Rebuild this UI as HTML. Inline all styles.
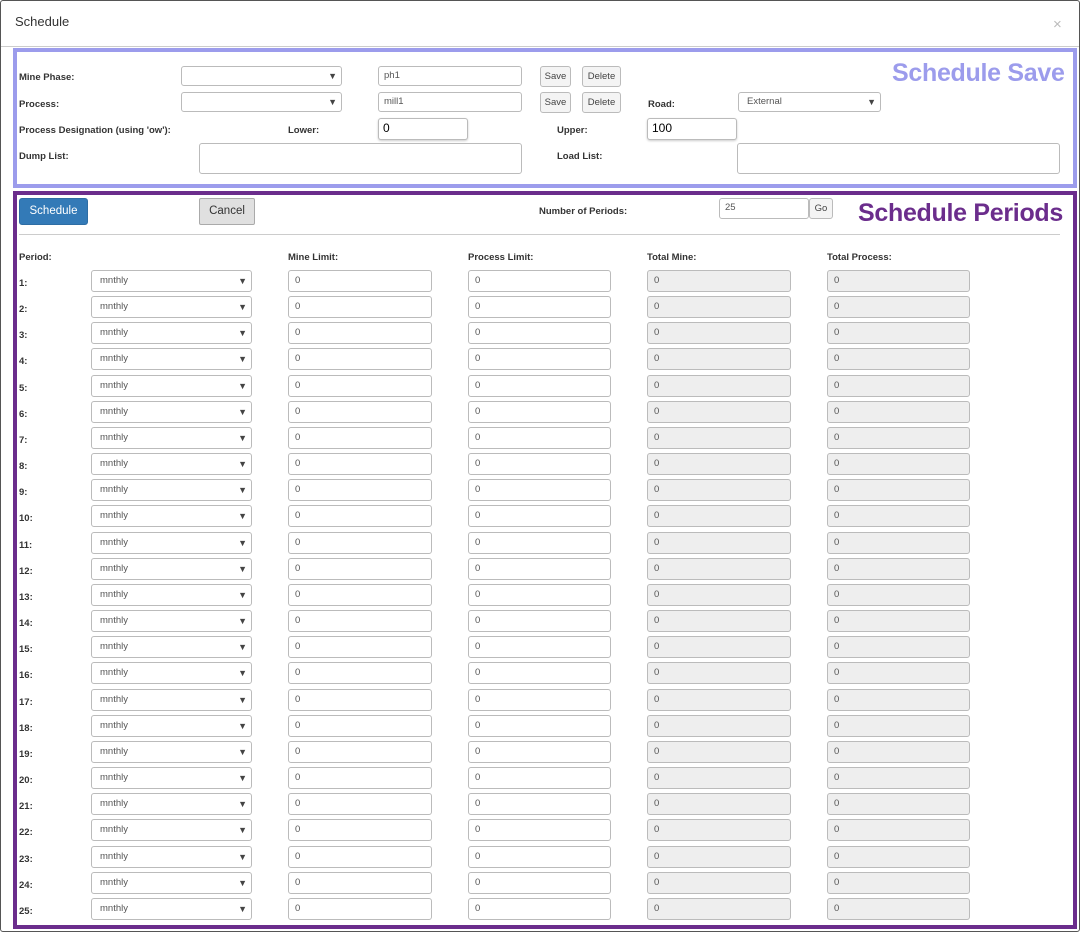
<!DOCTYPE html>
<html><head><meta charset="utf-8"><style>
*{box-sizing:border-box;margin:0;padding:0}
body{width:1082px;height:934px;background:#fff;font-family:"Liberation Sans",Arial,sans-serif;position:relative;overflow:hidden;color:#333}
.a{position:absolute}
.modal{left:0;top:0;width:1080px;height:932px;border:1px solid #555;border-radius:3px}
.lbl{position:absolute;font-size:9.5px;font-weight:bold;color:#333}
.in{position:absolute;height:22px;border:1px solid #bbb;border-radius:3px;background:#fff;font-size:9.5px;color:#555;padding:0 6px;line-height:20px}
.ro{background:#eee}
.sel{position:absolute;height:22px;border:1px solid #bbb;border-radius:3px;background:#fff;font-size:9.5px;color:#555;padding:0 8px;line-height:20px}
.sel:after{content:"▼";position:absolute;right:4px;top:0;font-size:9px;color:#444}
.btn{position:absolute;height:21px;border:1px solid #bbb;border-radius:3px;background:#f4f4f4;font-size:9.5px;color:#444;text-align:center;line-height:19px}
.row{position:absolute;left:0;width:1000px;height:22px}
.row .n{position:absolute;left:19px;top:8px;font-size:9.5px;font-weight:bold;color:#333}
.row .s{left:91px;width:161px;top:0}
.row .m{left:288px;width:144px;top:0}
.row .p{left:468px;width:143px;top:0}
.row .t{left:647px;width:144px;top:0}
.row .u{left:827px;width:143px;top:0}
.ttl{position:absolute;white-space:nowrap;font-weight:bold;font-family:"Liberation Sans",sans-serif;font-size:25px;letter-spacing:-0.3px}
</style></head><body>
<div class="a modal"></div>
<div class="a" style="left:15px;top:14px;font-size:13px;color:#333">Schedule</div>
<div class="a" style="left:1053px;top:16px;font-size:15px;color:#bbb">×</div>
<div class="a" style="left:1px;top:46px;width:1078px;height:1px;background:#ccc"></div>

<div class="a" style="left:13px;top:48px;width:1064px;height:140px;border:4px solid #9c9cec"></div>
<div class="ttl" style="left:892px;top:59px;color:#9c9cec">Schedule Save</div>

<div class="lbl" style="left:19px;top:72px">Mine Phase:</div>
<div class="sel" style="left:181px;top:66px;width:161px;height:20px;line-height:18px"></div>
<div class="in" style="left:378px;top:66px;width:144px;height:20px;line-height:18px;padding:0 5px">ph1</div>
<div class="btn" style="left:540px;top:66px;width:31px">Save</div>
<div class="btn" style="left:582px;top:66px;width:39px">Delete</div>

<div class="lbl" style="left:19px;top:99px">Process:</div>
<div class="sel" style="left:181px;top:92px;width:161px;height:20px;line-height:18px"></div>
<div class="in" style="left:378px;top:92px;width:144px;height:20px;line-height:18px;padding:0 5px">mill1</div>
<div class="btn" style="left:540px;top:92px;width:31px">Save</div>
<div class="btn" style="left:582px;top:92px;width:39px">Delete</div>
<div class="lbl" style="left:648px;top:99px">Road:</div>
<div class="sel" style="left:738px;top:92px;width:143px;height:20px;line-height:18px">External</div>

<div class="lbl" style="left:19px;top:125px">Process Designation (using 'ow'):</div>
<div class="lbl" style="left:288px;top:125px">Lower:</div>
<div class="in" style="left:378px;top:118px;width:90px;font-size:12px;color:#000;padding:0 4px;line-height:18px;box-shadow:0 1px 2px #ccc">0</div>
<div class="lbl" style="left:557px;top:125px">Upper:</div>
<div class="in" style="left:647px;top:118px;width:90px;font-size:12px;color:#000;padding:0 4px;line-height:18px;box-shadow:0 1px 2px #ccc">100</div>

<div class="lbl" style="left:19px;top:151px">Dump List:</div>
<div class="in" style="left:199px;top:143px;width:323px;height:31px"></div>
<div class="lbl" style="left:557px;top:151px">Load List:</div>
<div class="in" style="left:737px;top:143px;width:323px;height:31px"></div>

<div class="a" style="left:13px;top:191px;width:1064px;height:738px;border:4px solid #6b2d8c"></div>
<div class="ttl" style="left:858px;top:199px;color:#6b2d8c">Schedule Periods</div>

<div class="a" style="left:19px;top:198px;width:69px;height:27px;background:#337ab7;border:1px solid #2e6da4;border-radius:3px;color:#fff;font-size:11.5px;text-align:center;line-height:25px">Schedule</div>
<div class="a" style="left:199px;top:198px;width:56px;height:27px;background:#e0e0e0;border:1px solid #aaa;border-radius:2px;color:#333;font-size:11.5px;text-align:center;line-height:25px">Cancel</div>
<div class="lbl" style="left:539px;top:206px">Number of Periods:</div>
<div class="in" style="left:719px;top:198px;width:90px;height:21px;padding:0 5px;line-height:17px">25</div>
<div class="btn" style="left:809px;top:198px;width:24px;height:21px">Go</div>
<div class="a" style="left:19px;top:234px;width:1041px;height:1px;background:#ccc"></div>

<div class="lbl" style="left:19px;top:252px">Period:</div>
<div class="lbl" style="left:288px;top:252px">Mine Limit:</div>
<div class="lbl" style="left:468px;top:252px">Process Limit:</div>
<div class="lbl" style="left:647px;top:252px">Total Mine:</div>
<div class="lbl" style="left:827px;top:252px">Total Process:</div>

<div class="row" style="top:270px"><span class="n">1:</span><div class="sel s">mnthly</div><div class="in m">0</div><div class="in p">0</div><div class="in ro t">0</div><div class="in ro u">0</div></div>
<div class="row" style="top:296px"><span class="n">2:</span><div class="sel s">mnthly</div><div class="in m">0</div><div class="in p">0</div><div class="in ro t">0</div><div class="in ro u">0</div></div>
<div class="row" style="top:322px"><span class="n">3:</span><div class="sel s">mnthly</div><div class="in m">0</div><div class="in p">0</div><div class="in ro t">0</div><div class="in ro u">0</div></div>
<div class="row" style="top:348px"><span class="n">4:</span><div class="sel s">mnthly</div><div class="in m">0</div><div class="in p">0</div><div class="in ro t">0</div><div class="in ro u">0</div></div>
<div class="row" style="top:375px"><span class="n">5:</span><div class="sel s">mnthly</div><div class="in m">0</div><div class="in p">0</div><div class="in ro t">0</div><div class="in ro u">0</div></div>
<div class="row" style="top:401px"><span class="n">6:</span><div class="sel s">mnthly</div><div class="in m">0</div><div class="in p">0</div><div class="in ro t">0</div><div class="in ro u">0</div></div>
<div class="row" style="top:427px"><span class="n">7:</span><div class="sel s">mnthly</div><div class="in m">0</div><div class="in p">0</div><div class="in ro t">0</div><div class="in ro u">0</div></div>
<div class="row" style="top:453px"><span class="n">8:</span><div class="sel s">mnthly</div><div class="in m">0</div><div class="in p">0</div><div class="in ro t">0</div><div class="in ro u">0</div></div>
<div class="row" style="top:479px"><span class="n">9:</span><div class="sel s">mnthly</div><div class="in m">0</div><div class="in p">0</div><div class="in ro t">0</div><div class="in ro u">0</div></div>
<div class="row" style="top:505px"><span class="n">10:</span><div class="sel s">mnthly</div><div class="in m">0</div><div class="in p">0</div><div class="in ro t">0</div><div class="in ro u">0</div></div>
<div class="row" style="top:532px"><span class="n">11:</span><div class="sel s">mnthly</div><div class="in m">0</div><div class="in p">0</div><div class="in ro t">0</div><div class="in ro u">0</div></div>
<div class="row" style="top:558px"><span class="n">12:</span><div class="sel s">mnthly</div><div class="in m">0</div><div class="in p">0</div><div class="in ro t">0</div><div class="in ro u">0</div></div>
<div class="row" style="top:584px"><span class="n">13:</span><div class="sel s">mnthly</div><div class="in m">0</div><div class="in p">0</div><div class="in ro t">0</div><div class="in ro u">0</div></div>
<div class="row" style="top:610px"><span class="n">14:</span><div class="sel s">mnthly</div><div class="in m">0</div><div class="in p">0</div><div class="in ro t">0</div><div class="in ro u">0</div></div>
<div class="row" style="top:636px"><span class="n">15:</span><div class="sel s">mnthly</div><div class="in m">0</div><div class="in p">0</div><div class="in ro t">0</div><div class="in ro u">0</div></div>
<div class="row" style="top:662px"><span class="n">16:</span><div class="sel s">mnthly</div><div class="in m">0</div><div class="in p">0</div><div class="in ro t">0</div><div class="in ro u">0</div></div>
<div class="row" style="top:689px"><span class="n">17:</span><div class="sel s">mnthly</div><div class="in m">0</div><div class="in p">0</div><div class="in ro t">0</div><div class="in ro u">0</div></div>
<div class="row" style="top:715px"><span class="n">18:</span><div class="sel s">mnthly</div><div class="in m">0</div><div class="in p">0</div><div class="in ro t">0</div><div class="in ro u">0</div></div>
<div class="row" style="top:741px"><span class="n">19:</span><div class="sel s">mnthly</div><div class="in m">0</div><div class="in p">0</div><div class="in ro t">0</div><div class="in ro u">0</div></div>
<div class="row" style="top:767px"><span class="n">20:</span><div class="sel s">mnthly</div><div class="in m">0</div><div class="in p">0</div><div class="in ro t">0</div><div class="in ro u">0</div></div>
<div class="row" style="top:793px"><span class="n">21:</span><div class="sel s">mnthly</div><div class="in m">0</div><div class="in p">0</div><div class="in ro t">0</div><div class="in ro u">0</div></div>
<div class="row" style="top:819px"><span class="n">22:</span><div class="sel s">mnthly</div><div class="in m">0</div><div class="in p">0</div><div class="in ro t">0</div><div class="in ro u">0</div></div>
<div class="row" style="top:846px"><span class="n">23:</span><div class="sel s">mnthly</div><div class="in m">0</div><div class="in p">0</div><div class="in ro t">0</div><div class="in ro u">0</div></div>
<div class="row" style="top:872px"><span class="n">24:</span><div class="sel s">mnthly</div><div class="in m">0</div><div class="in p">0</div><div class="in ro t">0</div><div class="in ro u">0</div></div>
<div class="row" style="top:898px"><span class="n">25:</span><div class="sel s">mnthly</div><div class="in m">0</div><div class="in p">0</div><div class="in ro t">0</div><div class="in ro u">0</div></div>
</body></html>
